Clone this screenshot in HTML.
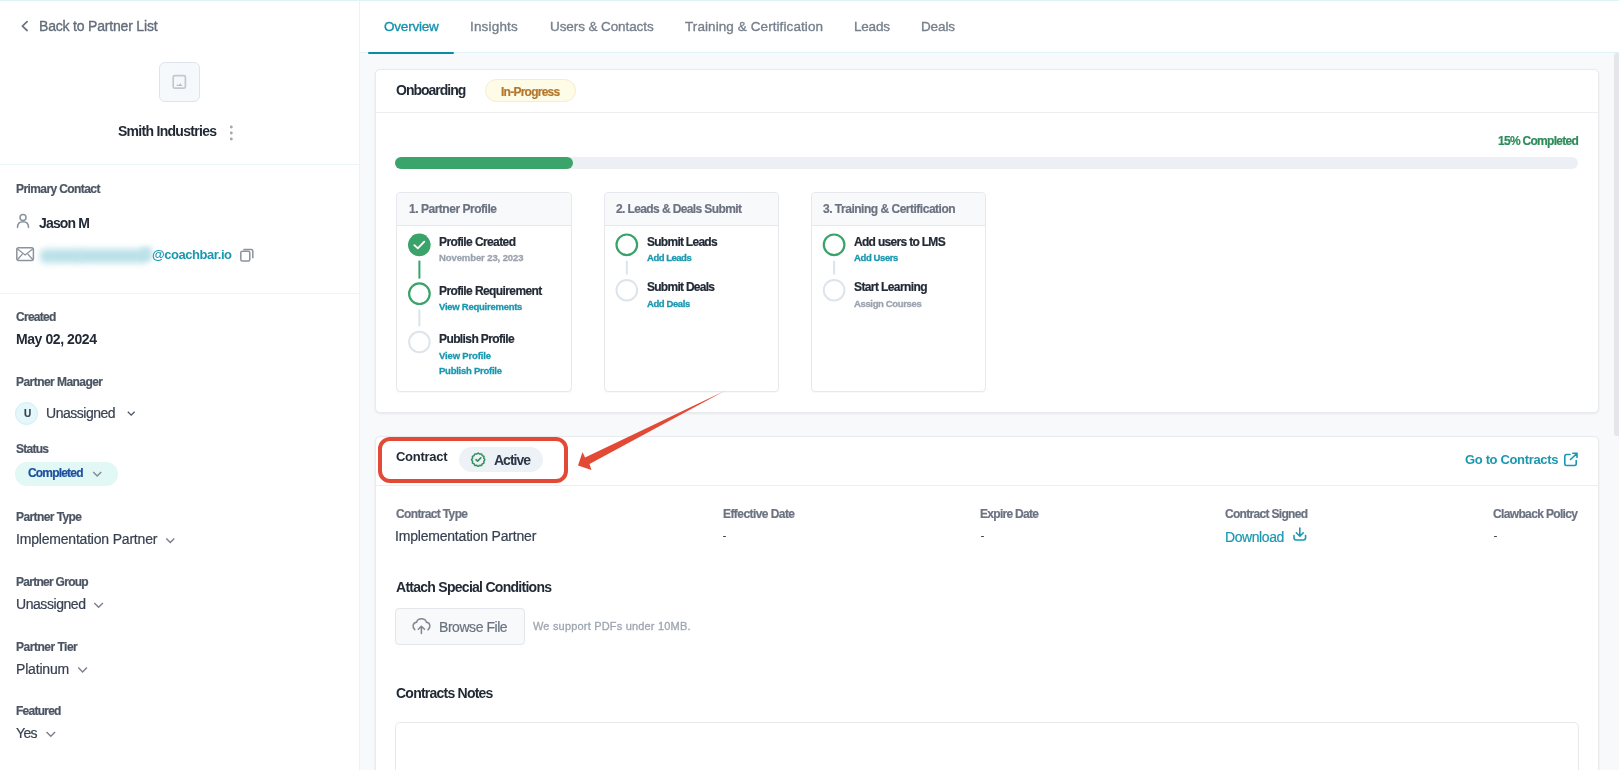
<!DOCTYPE html>
<html><head><meta charset="utf-8">
<style>
*{margin:0;padding:0;box-sizing:border-box}
html,body{width:1619px;height:770px;overflow:hidden;background:#f7f9fa;font-family:"Liberation Sans",sans-serif}
.a{position:absolute}
.tx{position:absolute;white-space:nowrap;line-height:normal;will-change:transform}
.mk{display:inline-block;width:0;height:0;vertical-align:baseline}
svg{position:absolute;overflow:visible}
</style></head><body>
<!-- sidebar -->
<div class="a" style="left:0;top:0;width:359px;height:770px;background:#fff"></div>
<div class="a" style="left:359px;top:0;width:1.3px;height:770px;background:#e4f7f7"></div>
<!-- tab bar -->
<div class="a" style="left:360px;top:0;width:1259px;height:52px;background:#fff"></div>
<div class="a" style="left:0;top:0;width:1619px;height:1px;background:#def4f7"></div>
<div class="a" style="left:360px;top:52px;width:1259px;height:1px;background:#e0f3f6"></div>
<div class="a" style="left:368px;top:51.5px;width:86px;height:2.5px;background:#0b8aa5;border-radius:1px"></div>
<!-- scrollbar -->
<div class="a" style="left:1613.5px;top:53px;width:5.5px;height:383px;background:#e4e6e9;border-radius:3px 0 0 3px"></div>

<!-- back chevron -->
<svg style="left:0;top:0" width="1" height="1"><path d="M27.1 21.7 L22.4 26.1 L27.1 30.5" fill="none" stroke="#6e7683" stroke-width="1.8" stroke-linecap="round" stroke-linejoin="round"/></svg>
<!-- logo box -->
<div class="a" style="left:159px;top:62px;width:40.5px;height:39.5px;background:#f6f9fc;border:1px solid #dfe4ea;border-radius:6px"></div>
<svg style="left:0;top:0" width="1" height="1"><rect x="173.2" y="75.7" width="12.2" height="12.5" rx="1.5" fill="none" stroke="#c3c8cf" stroke-width="1.7"/><path d="M176.3 86 L177.6 84.2 L178.6 85.2 L180.3 83.2 L182.6 86 Z" fill="#b9bfc6"/></svg>
<!-- kebab -->
<svg style="left:0;top:0" width="1" height="1"><circle cx="231.3" cy="127" r="1.45" fill="#a2a8b1"/><circle cx="231.3" cy="133" r="1.45" fill="#a2a8b1"/><circle cx="231.3" cy="139" r="1.45" fill="#a2a8b1"/></svg>
<div class="a" style="left:0;top:164px;width:359px;height:1px;background:#eaf6f8"></div>
<!-- person icon -->
<svg style="left:0;top:0" width="1" height="1"><circle cx="23" cy="217.6" r="3" fill="none" stroke="#8a939e" stroke-width="1.5"/><path d="M17.5 227.5 C17.5 223.3 20 221.8 23 221.8 C26 221.8 28.5 223.3 28.5 227.5" fill="none" stroke="#8a939e" stroke-width="1.5" stroke-linecap="round"/></svg>
<!-- mail icon -->
<svg style="left:0;top:0" width="1" height="1"><rect x="16.8" y="247.8" width="16.6" height="12.6" rx="1.8" fill="none" stroke="#8a939e" stroke-width="1.5"/><path d="M17.2 248.8 L25.1 255 L33 248.8 M17.5 259.5 L22.5 254 M32.7 259.5 L27.7 254" fill="none" stroke="#8a939e" stroke-width="1.2"/></svg>
<!-- blurred email -->
<div class="a" style="left:40px;top:249px;width:42px;height:14px;background:#b3dde5;filter:blur(3.2px);border-radius:5px;opacity:.9"></div>
<div class="a" style="left:78px;top:249px;width:70px;height:14px;background:#b3dde5;filter:blur(3.2px);border-radius:5px;opacity:.9"></div>
<div class="a" style="left:141px;top:247px;width:11px;height:14px;background:#b8e0e7;filter:blur(2.5px);opacity:.8"></div>
<!-- copy icon -->
<svg style="left:0;top:0" width="1" height="1"><rect x="240.8" y="251.2" width="9" height="9.8" rx="1.5" fill="#fff" stroke="#8a939e" stroke-width="1.5"/><path d="M244 250.3 L244 249.8 Q244 249.6 244.3 249.6 L251.2 249.6 Q252.8 249.6 252.8 251.2 L252.8 258.3" fill="none" stroke="#8a939e" stroke-width="1.5"/></svg>
<div class="a" style="left:0;top:292.5px;width:359px;height:1px;background:#eaf6f8"></div>
<!-- avatar -->
<div class="a" style="left:15.3px;top:401.8px;width:23.2px;height:23.2px;border-radius:50%;background:#e6f7fb;border:1px solid #cdeff5"></div>
<svg style="left:0;top:0" width="1" height="1">
<path d="M127.8 411.8 L131.2 415.2 L134.6 411.8" fill="none" stroke="#4b5563" stroke-width="1.3"/>
<path d="M166.3 538.6 L170.3 542.6 L174.3 538.6" fill="none" stroke="#7a818b" stroke-width="1.4"/>
<path d="M94.3 603 L98.6 607.3 L102.9 603" fill="none" stroke="#7a818b" stroke-width="1.4"/>
<path d="M78.3 667.6 L82.6 671.9 L86.9 667.6" fill="none" stroke="#7a818b" stroke-width="1.4"/>
<path d="M46.5 732 L50.8 736.3 L55.1 732" fill="none" stroke="#7a818b" stroke-width="1.4"/>
</svg>
<!-- status pill -->
<div class="a" style="left:15.4px;top:462px;width:102.3px;height:23.8px;border-radius:12px;background:#e2f8f5"></div>
<svg style="left:0;top:0" width="1" height="1"><path d="M93.2 472 L97.2 476 L101.2 472" fill="none" stroke="#858c96" stroke-width="1.5"/></svg>

<!-- ===== onboarding card ===== -->
<div class="a" style="left:375px;top:68.5px;width:1224px;height:344.3px;background:#fff;border:1px solid #e8eaee;border-radius:5px;box-shadow:0 1px 2.5px rgba(0,0,0,.07)"></div>
<div class="a" style="left:485.3px;top:79px;width:90.4px;height:22.8px;border-radius:12px;background:#fefbe7;border:1px solid #f8edc3"></div>
<div class="a" style="left:376px;top:112px;width:1221.5px;height:1px;background:#eceef1"></div>
<div class="a" style="left:395.4px;top:157px;width:1183px;height:11.6px;border-radius:6px;background:#ecf0f4"></div>
<div class="a" style="left:395.4px;top:157px;width:177.3px;height:11.6px;border-radius:6px;background:#3ba46b"></div>
<!-- step cards -->
<div class="a" style="left:395.5px;top:192px;width:176.5px;height:200px;border:1px solid #e6e8eb;border-radius:4px;background:#fff;box-shadow:0 1px 1px rgba(0,0,0,.03)"><div style="height:33px;background:#f7f9fb;border-bottom:1px solid #e6e8eb;border-radius:4px 4px 0 0"></div></div>
<div class="a" style="left:603.9px;top:192px;width:175px;height:200px;border:1px solid #e6e8eb;border-radius:4px;background:#fff;box-shadow:0 1px 1px rgba(0,0,0,.03)"><div style="height:33px;background:#f7f9fb;border-bottom:1px solid #e6e8eb;border-radius:4px 4px 0 0"></div></div>
<div class="a" style="left:810.9px;top:192px;width:175px;height:200px;border:1px solid #e6e8eb;border-radius:4px;background:#fff;box-shadow:0 1px 1px rgba(0,0,0,.03)"><div style="height:33px;background:#f7f9fb;border-bottom:1px solid #e6e8eb;border-radius:4px 4px 0 0"></div></div>
<svg style="left:0;top:0" width="1" height="1">
<!-- card1 -->
<circle cx="419.3" cy="244.9" r="11.3" fill="#3aa36a"/>
<path d="M414.3 245.2 L417.8 248.4 L424.3 241.6" fill="none" stroke="#fff" stroke-width="1.8" stroke-linecap="round" stroke-linejoin="round"/>
<rect x="418.4" y="260.6" width="2" height="18" fill="#3aa36a"/>
<circle cx="419.4" cy="293.7" r="10.3" fill="none" stroke="#3aa36a" stroke-width="2.2"/>
<rect x="418.4" y="309.6" width="2" height="16.8" fill="#dde3ea"/>
<circle cx="419.4" cy="342" r="10.3" fill="none" stroke="#dde4ec" stroke-width="2"/>
<!-- card2 -->
<circle cx="626.8" cy="244.8" r="10.3" fill="none" stroke="#3aa36a" stroke-width="2.2"/>
<rect x="625.8" y="260.7" width="2" height="13.8" fill="#dde3ea"/>
<circle cx="626.8" cy="290.2" r="10.3" fill="none" stroke="#dde4ec" stroke-width="2"/>
<!-- card3 -->
<circle cx="834.1" cy="244.8" r="10.3" fill="none" stroke="#3aa36a" stroke-width="2.2"/>
<rect x="833.1" y="260.7" width="2" height="13.8" fill="#dde3ea"/>
<circle cx="834.1" cy="290.2" r="10.3" fill="none" stroke="#dde4ec" stroke-width="2"/>
</svg>

<!-- ===== contract card ===== -->
<div class="a" style="left:375px;top:435.8px;width:1224px;height:400px;background:#fff;border:1px solid #e8eaee;border-radius:5px;box-shadow:0 1px 2.5px rgba(0,0,0,.07)"></div>
<div class="a" style="left:459.1px;top:447.1px;width:83.5px;height:25.1px;border-radius:12.5px;background:#edf2f6"></div>
<!-- badge check icon -->
<svg style="left:0;top:0" width="1" height="1">
<path d="M478.20 453.10 L478.62 453.23 L479.01 453.55 L479.35 453.90 L479.70 454.10 L480.10 454.10 L480.57 453.97 L481.07 453.89 L481.50 453.98 L481.80 454.31 L481.97 454.78 L482.10 455.25 L482.30 455.60 L482.65 455.80 L483.12 455.93 L483.59 456.10 L483.92 456.40 L484.01 456.83 L483.93 457.33 L483.80 457.80 L483.80 458.20 L484.00 458.55 L484.35 458.89 L484.67 459.28 L484.80 459.70 L484.67 460.12 L484.35 460.51 L484.00 460.85 L483.80 461.20 L483.80 461.60 L483.93 462.07 L484.01 462.57 L483.92 463.00 L483.59 463.30 L483.12 463.47 L482.65 463.60 L482.30 463.80 L482.10 464.15 L481.97 464.62 L481.80 465.09 L481.50 465.42 L481.07 465.51 L480.57 465.43 L480.10 465.30 L479.70 465.30 L479.35 465.50 L479.01 465.85 L478.62 466.17 L478.20 466.30 L477.78 466.17 L477.39 465.85 L477.05 465.50 L476.70 465.30 L476.30 465.30 L475.83 465.43 L475.33 465.51 L474.90 465.42 L474.60 465.09 L474.43 464.62 L474.30 464.15 L474.10 463.80 L473.75 463.60 L473.28 463.47 L472.81 463.30 L472.48 463.00 L472.39 462.57 L472.47 462.07 L472.60 461.60 L472.60 461.20 L472.40 460.85 L472.05 460.51 L471.73 460.12 L471.60 459.70 L471.73 459.28 L472.05 458.89 L472.40 458.55 L472.60 458.20 L472.60 457.80 L472.47 457.33 L472.39 456.83 L472.48 456.40 L472.81 456.10 L473.28 455.93 L473.75 455.80 L474.10 455.60 L474.30 455.25 L474.43 454.78 L474.60 454.31 L474.90 453.98 L475.33 453.89 L475.83 453.97 L476.30 454.10 L476.70 454.10 L477.05 453.90 L477.39 453.55 L477.78 453.23 Z" fill="none" stroke="#32905e" stroke-width="1.5" stroke-linejoin="round"/>
<path d="M476 459.6 L477.6 461.1 L480.8 457.9" fill="none" stroke="#32905e" stroke-width="1.6" stroke-linecap="round" stroke-linejoin="round"/>
</svg>
<div class="a" style="left:376px;top:485px;width:1221.5px;height:1px;background:#eceef1"></div>
<!-- ext link icon -->
<svg style="left:0;top:0" width="1" height="1"><path d="M1570 454.5 L1566.5 454.5 Q1564.8 454.5 1564.8 456.2 L1564.8 463.8 Q1564.8 465.5 1566.5 465.5 L1574.5 465.5 Q1576.2 465.5 1576.2 463.8 L1576.2 460.5" fill="none" stroke="#1a98b0" stroke-width="1.6" stroke-linecap="round"/><path d="M1570.5 459.5 L1577 453.3 M1572.8 453.3 L1577 453.3 L1577 457.5" fill="none" stroke="#1a98b0" stroke-width="1.6" stroke-linecap="round" stroke-linejoin="round"/></svg>
<!-- download icon -->
<svg style="left:0;top:0" width="1" height="1"><path d="M1299.8 528 L1299.8 536 M1296.3 532.8 L1299.8 536.2 L1303.3 532.8" fill="none" stroke="#1a98b0" stroke-width="1.6" stroke-linecap="round" stroke-linejoin="round"/><path d="M1294 535.5 L1294 537.8 Q1294 540 1296.2 540 L1303.4 540 Q1305.6 540 1305.6 537.8 L1305.6 535.5" fill="none" stroke="#1a98b0" stroke-width="1.6" stroke-linecap="round"/></svg>
<div class="a" style="left:722.8px;top:535.6px;width:3.7px;height:1.6px;background:#3b4452;border-radius:1px"></div>
<div class="a" style="left:980.6px;top:535.6px;width:3.7px;height:1.6px;background:#3b4452;border-radius:1px"></div>
<div class="a" style="left:1493.6px;top:535.6px;width:3.7px;height:1.6px;background:#3b4452;border-radius:1px"></div>
<!-- browse button -->
<div class="a" style="left:395.3px;top:608.1px;width:129.4px;height:36.6px;border-radius:4px;background:#f7f9fb;border:1px solid #e3e6ea"></div>
<svg style="left:0;top:0" width="1" height="1"><path d="M414.8 629.8 C412 627.3 412.6 622.6 416.6 622.2 C417.8 617.6 425.2 617.6 426.4 622.2 C430.4 622.6 431 627.3 428 629.8" fill="none" stroke="#7f8792" stroke-width="1.5" stroke-linecap="round"/><path d="M421.4 633.4 L421.4 626.3 M418.3 629.3 L421.4 626.2 L424.5 629.3" fill="none" stroke="#7f8792" stroke-width="1.5" stroke-linecap="round" stroke-linejoin="round"/></svg>
<!-- textarea -->
<div class="a" style="left:395px;top:722px;width:1184px;height:120px;border-radius:5px;background:#fff;border:1.5px solid #e6e8eb"></div>

<!-- red annotation -->
<div class="a" style="left:378.3px;top:437px;width:189.5px;height:45.7px;border:4.2px solid #e24a36;border-radius:12px"></div>
<svg style="left:0;top:0" width="1" height="1"><path d="M724.5 391 L585 457.5 L582.5 452 L578 465.5 L591.5 470 L589.5 464 Z" fill="#e24a36"/></svg>

<div class="tx" id="t0" style="left:39.00px;top:18.00px;font-size:14px;color:#646d7b;letter-spacing:-0.188px;-webkit-text-stroke:0.35px currentColor;"><span>Back to Partner List</span></div>
<div class="tx" id="t1" style="left:118.00px;top:123.00px;font-size:14px;color:#222a36;font-weight:700;letter-spacing:-0.713px;"><span>Smith Industries</span></div>
<div class="tx" id="t2" style="left:15.60px;top:181.80px;font-size:12px;color:#4b5563;font-weight:700;letter-spacing:-0.593px;-webkit-text-stroke:0.2px currentColor;"><span>Primary Contact</span></div>
<div class="tx" id="t3" style="left:39.00px;top:214.61px;font-size:14px;color:#222a36;font-weight:700;letter-spacing:-0.836px;"><span>Jason M</span></div>
<div class="tx" id="t4" style="left:152.00px;top:246.61px;font-size:13px;color:#1a98b0;font-weight:700;letter-spacing:-0.449px;"><span>@coachbar.io</span></div>
<div class="tx" id="t5" style="left:15.60px;top:310.00px;font-size:12px;color:#4b5563;font-weight:700;letter-spacing:-0.715px;-webkit-text-stroke:0.2px currentColor;"><span>Created</span></div>
<div class="tx" id="t6" style="left:15.60px;top:331.30px;font-size:14px;color:#222a36;font-weight:700;letter-spacing:-0.420px;"><span>May 02, 2024</span></div>
<div class="tx" id="t7" style="left:15.60px;top:374.80px;font-size:12px;color:#4b5563;font-weight:700;letter-spacing:-0.550px;-webkit-text-stroke:0.2px currentColor;"><span>Partner Manager</span></div>
<div class="tx" id="t8" style="left:23.60px;top:407.80px;font-size:10px;color:#374151;font-weight:700;-webkit-text-stroke:0.2px currentColor;"><span>U</span></div>
<div class="tx" id="t9" style="left:46.00px;top:405.00px;font-size:14px;color:#374151;letter-spacing:-0.482px;-webkit-text-stroke:0.2px currentColor;"><span>Unassigned</span></div>
<div class="tx" id="t10" style="left:15.70px;top:441.91px;font-size:12px;color:#4b5563;font-weight:700;letter-spacing:-0.738px;-webkit-text-stroke:0.2px currentColor;"><span>Status</span></div>
<div class="tx" id="t11" style="left:27.60px;top:466.21px;font-size:12px;color:#1d4f9e;font-weight:700;letter-spacing:-0.814px;-webkit-text-stroke:0.2px currentColor;"><span>Completed</span></div>
<div class="tx" id="t12" style="left:15.70px;top:510.00px;font-size:12px;color:#4b5563;font-weight:700;letter-spacing:-0.588px;-webkit-text-stroke:0.2px currentColor;"><span>Partner Type</span></div>
<div class="tx" id="t13" style="left:15.70px;top:531.30px;font-size:14px;color:#374151;letter-spacing:-0.197px;-webkit-text-stroke:0.2px currentColor;"><span>Implementation Partner</span></div>
<div class="tx" id="t14" style="left:15.60px;top:575.00px;font-size:12px;color:#4b5563;font-weight:700;letter-spacing:-0.722px;-webkit-text-stroke:0.2px currentColor;"><span>Partner Group</span></div>
<div class="tx" id="t15" style="left:15.60px;top:596.00px;font-size:14px;color:#374151;letter-spacing:-0.438px;-webkit-text-stroke:0.2px currentColor;"><span>Unassigned</span></div>
<div class="tx" id="t16" style="left:15.60px;top:639.50px;font-size:12px;color:#4b5563;font-weight:700;letter-spacing:-0.487px;-webkit-text-stroke:0.2px currentColor;"><span>Partner Tier</span></div>
<div class="tx" id="t17" style="left:15.60px;top:660.91px;font-size:14px;color:#374151;letter-spacing:-0.181px;-webkit-text-stroke:0.2px currentColor;"><span>Platinum</span></div>
<div class="tx" id="t18" style="left:15.60px;top:704.00px;font-size:12px;color:#4b5563;font-weight:700;letter-spacing:-0.755px;-webkit-text-stroke:0.2px currentColor;"><span>Featured</span></div>
<div class="tx" id="t19" style="left:15.60px;top:725.30px;font-size:14px;color:#374151;letter-spacing:-0.672px;-webkit-text-stroke:0.2px currentColor;"><span>Yes</span></div>
<div class="tx" id="t20" style="left:384.20px;top:19.21px;font-size:13.5px;color:#1592ab;letter-spacing:-0.209px;-webkit-text-stroke:0.35px currentColor;"><span>Overview</span></div>
<div class="tx" id="t21" style="left:470.20px;top:19.21px;font-size:13.5px;color:#77808d;letter-spacing:0.181px;-webkit-text-stroke:0.35px currentColor;"><span>Insights</span></div>
<div class="tx" id="t22" style="left:549.70px;top:19.21px;font-size:13.5px;color:#77808d;letter-spacing:-0.090px;-webkit-text-stroke:0.35px currentColor;"><span>Users &amp; Contacts</span></div>
<div class="tx" id="t23" style="left:685.00px;top:19.21px;font-size:13.5px;color:#77808d;letter-spacing:0.084px;-webkit-text-stroke:0.35px currentColor;"><span>Training &amp; Certification</span></div>
<div class="tx" id="t24" style="left:854.00px;top:19.21px;font-size:13.5px;color:#77808d;letter-spacing:-0.199px;-webkit-text-stroke:0.35px currentColor;"><span>Leads</span></div>
<div class="tx" id="t25" style="left:921.00px;top:19.21px;font-size:13.5px;color:#77808d;letter-spacing:-0.129px;-webkit-text-stroke:0.35px currentColor;"><span>Deals</span></div>
<div class="tx" id="t26" style="left:395.70px;top:81.61px;font-size:14px;color:#222a36;font-weight:700;letter-spacing:-1.003px;"><span>Onboarding</span></div>
<div class="tx" id="t27" style="left:501.00px;top:84.80px;font-size:12px;color:#b4782c;font-weight:700;letter-spacing:-0.749px;-webkit-text-stroke:0.2px currentColor;"><span>In-Progress</span></div>
<div class="tx" id="t28" style="left:1497.60px;top:133.71px;font-size:12px;color:#2e8b5a;font-weight:700;letter-spacing:-0.713px;-webkit-text-stroke:0.2px currentColor;"><span>15% Completed</span></div>
<div class="tx" id="t29" style="left:408.70px;top:202.00px;font-size:12px;color:#6b7280;font-weight:700;letter-spacing:-0.473px;-webkit-text-stroke:0.2px currentColor;"><span>1. Partner Profile</span></div>
<div class="tx" id="t30" style="left:615.70px;top:202.00px;font-size:12px;color:#6b7280;font-weight:700;letter-spacing:-0.609px;-webkit-text-stroke:0.2px currentColor;"><span>2. Leads &amp; Deals Submit</span></div>
<div class="tx" id="t31" style="left:822.70px;top:202.00px;font-size:12px;color:#6b7280;font-weight:700;letter-spacing:-0.491px;-webkit-text-stroke:0.2px currentColor;"><span>3. Training &amp; Certification</span></div>
<div class="tx" id="t32" style="left:439.10px;top:234.50px;font-size:12px;color:#222a36;font-weight:700;letter-spacing:-0.597px;-webkit-text-stroke:0.2px currentColor;"><span>Profile Created</span></div>
<div class="tx" id="t33" style="left:439.10px;top:252.00px;font-size:9.5px;color:#9ca3af;font-weight:700;letter-spacing:-0.100px;-webkit-text-stroke:0.3px currentColor;"><span>November 23, 2023</span></div>
<div class="tx" id="t34" style="left:439.10px;top:283.91px;font-size:12px;color:#222a36;font-weight:700;letter-spacing:-0.596px;-webkit-text-stroke:0.2px currentColor;"><span>Profile Requirement</span></div>
<div class="tx" id="t35" style="left:439.10px;top:301.41px;font-size:9.5px;color:#1a98b0;font-weight:700;letter-spacing:-0.254px;-webkit-text-stroke:0.3px currentColor;"><span>View Requirements</span></div>
<div class="tx" id="t36" style="left:439.10px;top:332.11px;font-size:12px;color:#222a36;font-weight:700;letter-spacing:-0.601px;-webkit-text-stroke:0.2px currentColor;"><span>Publish Profile</span></div>
<div class="tx" id="t37" style="left:439.10px;top:349.71px;font-size:9.5px;color:#1a98b0;font-weight:700;letter-spacing:-0.153px;-webkit-text-stroke:0.3px currentColor;"><span>View Profile</span></div>
<div class="tx" id="t38" style="left:439.10px;top:365.00px;font-size:9.5px;color:#1a98b0;font-weight:700;letter-spacing:-0.251px;-webkit-text-stroke:0.3px currentColor;"><span>Publish Profile</span></div>
<div class="tx" id="t39" style="left:646.50px;top:234.80px;font-size:12px;color:#222a36;font-weight:700;letter-spacing:-0.735px;-webkit-text-stroke:0.2px currentColor;"><span>Submit Leads</span></div>
<div class="tx" id="t40" style="left:646.50px;top:252.41px;font-size:9.5px;color:#1a98b0;font-weight:700;letter-spacing:-0.483px;-webkit-text-stroke:0.3px currentColor;"><span>Add Leads</span></div>
<div class="tx" id="t41" style="left:646.50px;top:280.11px;font-size:12px;color:#222a36;font-weight:700;letter-spacing:-0.730px;-webkit-text-stroke:0.2px currentColor;"><span>Submit Deals</span></div>
<div class="tx" id="t42" style="left:646.50px;top:297.61px;font-size:9.5px;color:#1a98b0;font-weight:700;letter-spacing:-0.409px;-webkit-text-stroke:0.3px currentColor;"><span>Add Deals</span></div>
<div class="tx" id="t43" style="left:853.50px;top:234.80px;font-size:12px;color:#222a36;font-weight:700;letter-spacing:-0.688px;-webkit-text-stroke:0.2px currentColor;"><span>Add users to LMS</span></div>
<div class="tx" id="t44" style="left:853.50px;top:252.41px;font-size:9.5px;color:#1a98b0;font-weight:700;letter-spacing:-0.389px;-webkit-text-stroke:0.3px currentColor;"><span>Add Users</span></div>
<div class="tx" id="t45" style="left:853.50px;top:280.11px;font-size:12px;color:#222a36;font-weight:700;letter-spacing:-0.605px;-webkit-text-stroke:0.2px currentColor;"><span>Start Learning</span></div>
<div class="tx" id="t46" style="left:853.50px;top:297.61px;font-size:9.5px;color:#9ca3af;font-weight:700;letter-spacing:-0.356px;-webkit-text-stroke:0.3px currentColor;"><span>Assign Courses</span></div>
<div class="tx" id="t47" style="left:395.80px;top:449.21px;font-size:13px;color:#222a36;font-weight:700;letter-spacing:-0.279px;"><span>Contract</span></div>
<div class="tx" id="t48" style="left:494.30px;top:451.50px;font-size:14px;color:#2d3748;font-weight:700;letter-spacing:-1.006px;"><span>Active</span></div>
<div class="tx" id="t49" style="left:1465.20px;top:452.21px;font-size:13px;color:#1a98b0;font-weight:700;letter-spacing:-0.345px;"><span>Go to Contracts</span></div>
<div class="tx" id="t50" style="left:395.90px;top:507.00px;font-size:12px;color:#6b7280;font-weight:700;letter-spacing:-0.650px;-webkit-text-stroke:0.2px currentColor;"><span>Contract Type</span></div>
<div class="tx" id="t51" style="left:722.80px;top:507.00px;font-size:12px;color:#6b7280;font-weight:700;letter-spacing:-0.567px;-webkit-text-stroke:0.2px currentColor;"><span>Effective Date</span></div>
<div class="tx" id="t52" style="left:980.40px;top:507.00px;font-size:12px;color:#6b7280;font-weight:700;letter-spacing:-0.703px;-webkit-text-stroke:0.2px currentColor;"><span>Expire Date</span></div>
<div class="tx" id="t53" style="left:1225.00px;top:507.00px;font-size:12px;color:#6b7280;font-weight:700;letter-spacing:-0.691px;-webkit-text-stroke:0.2px currentColor;"><span>Contract Signed</span></div>
<div class="tx" id="t54" style="left:1493.40px;top:507.00px;font-size:12px;color:#6b7280;font-weight:700;letter-spacing:-0.646px;-webkit-text-stroke:0.2px currentColor;"><span>Clawback Policy</span></div>
<div class="tx" id="t55" style="left:395.10px;top:527.80px;font-size:14px;color:#374151;letter-spacing:-0.201px;-webkit-text-stroke:0.2px currentColor;"><span>Implementation Partner</span></div>
<div class="tx" id="t56" style="left:1225.00px;top:528.91px;font-size:14px;color:#1a98b0;letter-spacing:-0.424px;-webkit-text-stroke:0.2px currentColor;"><span>Download</span></div>
<div class="tx" id="t57" style="left:395.90px;top:578.71px;font-size:14px;color:#222a36;font-weight:700;letter-spacing:-0.728px;"><span>Attach Special Conditions</span></div>
<div class="tx" id="t58" style="left:439.30px;top:618.71px;font-size:14px;color:#6b7280;letter-spacing:-0.454px;-webkit-text-stroke:0.2px currentColor;"><span>Browse File</span></div>
<div class="tx" id="t59" style="left:532.80px;top:620.00px;font-size:11px;color:#9ea6b0;letter-spacing:0.186px;-webkit-text-stroke:0.3px currentColor;"><span>We support PDFs under 10MB.</span></div>
<div class="tx" id="t60" style="left:395.90px;top:685.11px;font-size:14px;color:#222a36;font-weight:700;letter-spacing:-0.767px;"><span>Contracts Notes</span></div>
</body></html>
